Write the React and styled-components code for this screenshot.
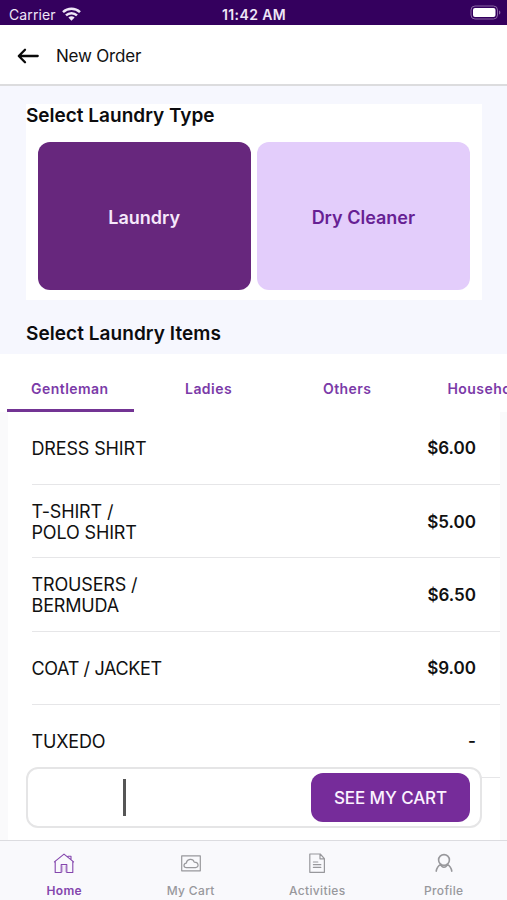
import React from "react";
import styled, { createGlobalStyle } from "styled-components";

const GlobalStyle = createGlobalStyle`
  *, *::before, *::after { box-sizing: border-box; }
  body {
    margin: 0;
    overflow: hidden;
    font-family: Inter, "Liberation Sans", sans-serif;
    color: #111;
    background: #fff;
  }
  button { font: inherit; border: 0; padding: 0; background: none; color: inherit; }
`;

const Screen = styled.div`
  position: relative;
  display: flex;
  flex-direction: column;
  width: 507px;
  height: 900px;
  overflow: hidden;
  background: #fff;
`;

const StatusBar = styled.div`
  flex: none;
  display: grid;
  grid-template-columns: 1fr auto 1fr;
  align-items: center;
  height: 25px;
  padding: 3px 6px 0 9px;
  background: #34005e;
  color: #efe6f7;
  font-size: 13px;
`;

const Carrier = styled.span`
  display: flex;
  align-items: center;
  gap: 6px;
  font-size: 14px;
  letter-spacing: 0.1px;
`;

const Clock = styled.span`
  margin-right: 2px;
  font-weight: 600;
  font-size: 14px;
  letter-spacing: 0.4px;
`;

const Battery = styled.svg`
  justify-self: end;
  margin-top: -3px;
`;

const Header = styled.header`
  flex: none;
  display: flex;
  align-items: center;
  gap: 17px;
  height: 61px;
  padding: 3px 17px 0;
  border-bottom: 2px solid #dcdcde;
`;

const HeaderTitle = styled.h1`
  margin: 0;
  font-size: 17px;
  font-weight: 400;
  letter-spacing: -0.2px;
`;

const TypeSection = styled.section`
  flex: none;
  height: 268px;
  padding: 18px 25px 0 26px;
  background: #f6f7fe;
`;

const TypeCard = styled.div`
  height: 196px;
  background: #fff;
`;

const SectionTitle = styled.h2`
  margin: 0;
  font-size: 19px;
  line-height: 23px;
  font-weight: 600;
  color: #0c0c0e;
  letter-spacing: ${(p) => p.$spacing || "0"};
`;

const ItemsHeading = styled.div`
  padding-top: 22px;
`;

const TileRow = styled.div`
  display: grid;
  grid-template-columns: 1fr 1fr;
  gap: 6px;
  height: 148px;
  margin: 15px 12px 0 11.5px;
`;

const Tile = styled.button`
  padding-top: 2px;
  border-radius: 12px;
  background: ${(p) => (p.$active ? "#67277d" : "#e3cdfb")};
  color: ${(p) => (p.$active ? "#f6e8fb" : "#671f94")};
  font-size: 18px;
  font-weight: 600;
`;

const Tabs = styled.nav`
  flex: none;
  display: flex;
  height: 58px;
`;

const Tab = styled.button`
  flex: 0 0 138.7px;
  display: flex;
  flex-direction: column;
  justify-content: flex-end;
  color: #7b3aa8;
  font-size: 14px;
  line-height: 18px;
  font-weight: 600;
  letter-spacing: 0.45px;

  &::after {
    content: "";
    height: 3px;
    margin: 11px 5px 0 7px;
    background: ${(p) => (p.$active ? "#733494" : "transparent")};
  }
`;

const TabLabel = styled.span`
  padding-left: 1px;
  text-align: center;
`;

const ListArea = styled.main`
  flex: 1;
  min-height: 0;
  padding: 0 7px 0 8px;
  background: #fafafb;
  overflow: hidden;
`;

const List = styled.ul`
  height: 100%;
  margin: 0;
  padding: 0 0 0 24px;
  list-style: none;
  background: #fff;
`;

const Item = styled.li`
  display: flex;
  align-items: center;
  justify-content: space-between;
  height: 73.2px;
  padding: 2px 24px 0 0;
  border-bottom: 1px solid #e6e6e8;
  font-size: 18px;
  line-height: 21.5px;
`;

const ItemName = styled.span`
  margin-left: -0.5px;
  white-space: pre;
  letter-spacing: ${(p) => p.$spacing || "-0.15px"};
`;

const Price = styled.span`
  font-size: 17px;
  font-weight: 600;
`;

const CartBar = styled.div`
  position: absolute;
  left: 26px;
  bottom: 72px;
  display: flex;
  align-items: center;
  justify-content: space-between;
  width: 456px;
  height: 61px;
  padding: 0 10px 0 95px;
  border: 2px solid #e5e5e6;
  border-radius: 12px;
  background: #fff;
`;

const Caret = styled.span`
  width: 2.5px;
  height: 37px;
  background: #565656;
`;

const CartButton = styled.button`
  width: 159px;
  height: 49px;
  border-radius: 12px;
  background: #762c9a;
  color: #fbf2ff;
  font-size: 17px;
  font-weight: 500;
  letter-spacing: -0.1px;
`;

const BottomNav = styled.nav`
  flex: none;
  display: grid;
  grid-template-columns: repeat(4, 1fr);
  height: 60px;
  padding-left: 1px;
  border-top: 1px solid #dcdce0;
  background: #f9f9fc;
`;

const NavItem = styled.button`
  display: flex;
  flex-direction: column;
  align-items: center;
  padding-top: 11px;
  gap: 9px;
  color: ${(p) => (p.$active ? "#8446ad" : "#98989c")};
  font-size: 12px;
  line-height: 16px;
  font-weight: ${(p) => (p.$active ? 600 : 500)};
  letter-spacing: 0.35px;
`;

const NavIcon = styled.svg`
  display: block;
  width: 22px;
  height: 22px;
  fill: none;
  stroke: currentColor;
  stroke-width: ${(p) => p.$weight || 1};
  stroke-linejoin: round;
  stroke-linecap: round;
`;

const HomeIcon = () => (
  <NavIcon viewBox="0 0 22 22" $weight={1.1}>
    <path d="M1.4 9.9 11 2.1l9.6 7.8M2.2 9.4v11.1h6v-8h5.6v8h6V9.4M15 4.2h3v3.6" />
    <path d="M9.6 13.8v6M12.4 13.8v6" opacity=".35" />
  </NavIcon>
);

const CartIcon = () => (
  <NavIcon viewBox="0 0 22 22" $weight={1.2}>
    <rect x="1.7" y="3.9" width="18.6" height="14.9" />
    <path d="M6.5 15.7c-3.4-.2-3.2-4.3-.2-4.6.6-4.4 6.6-5 7.9-1 4.6-.2 5.2 5.4 1.3 5.6z" />
  </NavIcon>
);

const ActivitiesIcon = () => (
  <NavIcon viewBox="0 0 22 22" $weight={1.2}>
    <path d="M3.8 2h10.4l4.2 4.6v13.7H3.8zM14 2v4.8h4.4M7.4 10h4.4M7.4 12.7h7.4M7.4 15.4h7.4" />
  </NavIcon>
);

const ProfileIcon = () => (
  <NavIcon viewBox="0 0 22 22" $weight={1.6}>
    <circle cx="11" cy="8" r="5.4" />
    <path d="M7.8 12.4C5.3 13.7 3.7 16.1 3.2 19.2M14.2 12.4c2.5 1.3 4.1 3.7 4.6 6.8M7.8 12.4c.9 3.8 5.5 3.8 6.4 0" />
  </NavIcon>
);

const tabs = ["Gentleman", "Ladies", "Others", "Household"];

const items = [
  { name: "DRESS SHIRT", price: "$6.00" },
  { name: "T-SHIRT /\nPOLO SHIRT", price: "$5.00" },
  { name: "TROUSERS /\nBERMUDA", price: "$6.50" },
  { name: "COAT / JACKET", price: "$9.00", spacing: "-0.35px" },
  { name: "TUXEDO", price: "-" },
];

const navItems = [
  { label: "Home", Icon: HomeIcon },
  { label: "My Cart", Icon: CartIcon },
  { label: "Activities", Icon: ActivitiesIcon },
  { label: "Profile", Icon: ProfileIcon },
];

export default function App() {
  return (
    <Screen>
      <GlobalStyle />
      <StatusBar>
        <Carrier>
          Carrier
          <svg width="19" height="14" viewBox="0 0 19 14" fill="none" stroke="currentColor" strokeWidth="2.5">
            <path d="M1 5.1c4.8-4.5 12.2-4.5 17 0M4 8.3c3.1-2.9 7.9-2.9 11 0" />
            <path d="M6.4 10.5c1.8-1.6 4.4-1.6 6.2 0l-3.1 3.2z" fill="currentColor" stroke="none" />
          </svg>
        </Carrier>
        <Clock>11:42 AM</Clock>
        <Battery width="31" height="15" viewBox="0 0 31 15">
          <rect x="1" y="1" width="26.5" height="13" rx="4" fill="none" stroke="#8965a3" />
          <rect x="3" y="3" width="22.5" height="9" rx="2" fill="#fff" />
          <path d="M29 5.5c1.8.5 1.8 3.5 0 4z" fill="#8965a3" />
        </Battery>
      </StatusBar>
      <Header>
        <svg width="22" height="16" viewBox="0 0 22 16" fill="none" stroke="#0a0a0a" strokeWidth="2.3" strokeLinecap="round" strokeLinejoin="round">
          <path d="M20.7 8H2M8 1.8 1.8 8 8 14.2" />
        </svg>
        <HeaderTitle>New Order</HeaderTitle>
      </Header>
      <TypeSection>
        <TypeCard>
          <SectionTitle>Select Laundry Type</SectionTitle>
          <TileRow>
            <Tile $active>Laundry</Tile>
            <Tile>Dry Cleaner</Tile>
          </TileRow>
        </TypeCard>
        <ItemsHeading>
          <SectionTitle $spacing="0.06px">Select Laundry Items</SectionTitle>
        </ItemsHeading>
      </TypeSection>
      <Tabs>
        {tabs.map((label, i) => (
          <Tab key={label} $active={i === 0}>
            <TabLabel>{label}</TabLabel>
          </Tab>
        ))}
      </Tabs>
      <ListArea>
        <List>
          {items.map(({ name, price, spacing }) => (
            <Item key={name}>
              <ItemName $spacing={spacing}>{name}</ItemName>
              <Price>{price}</Price>
            </Item>
          ))}
        </List>
      </ListArea>
      <CartBar>
        <Caret />
        <CartButton>SEE MY CART</CartButton>
      </CartBar>
      <BottomNav>
        {navItems.map(({ label, Icon }, i) => (
          <NavItem key={label} $active={i === 0}>
            <Icon />
            {label}
          </NavItem>
        ))}
      </BottomNav>
    </Screen>
  );
}
